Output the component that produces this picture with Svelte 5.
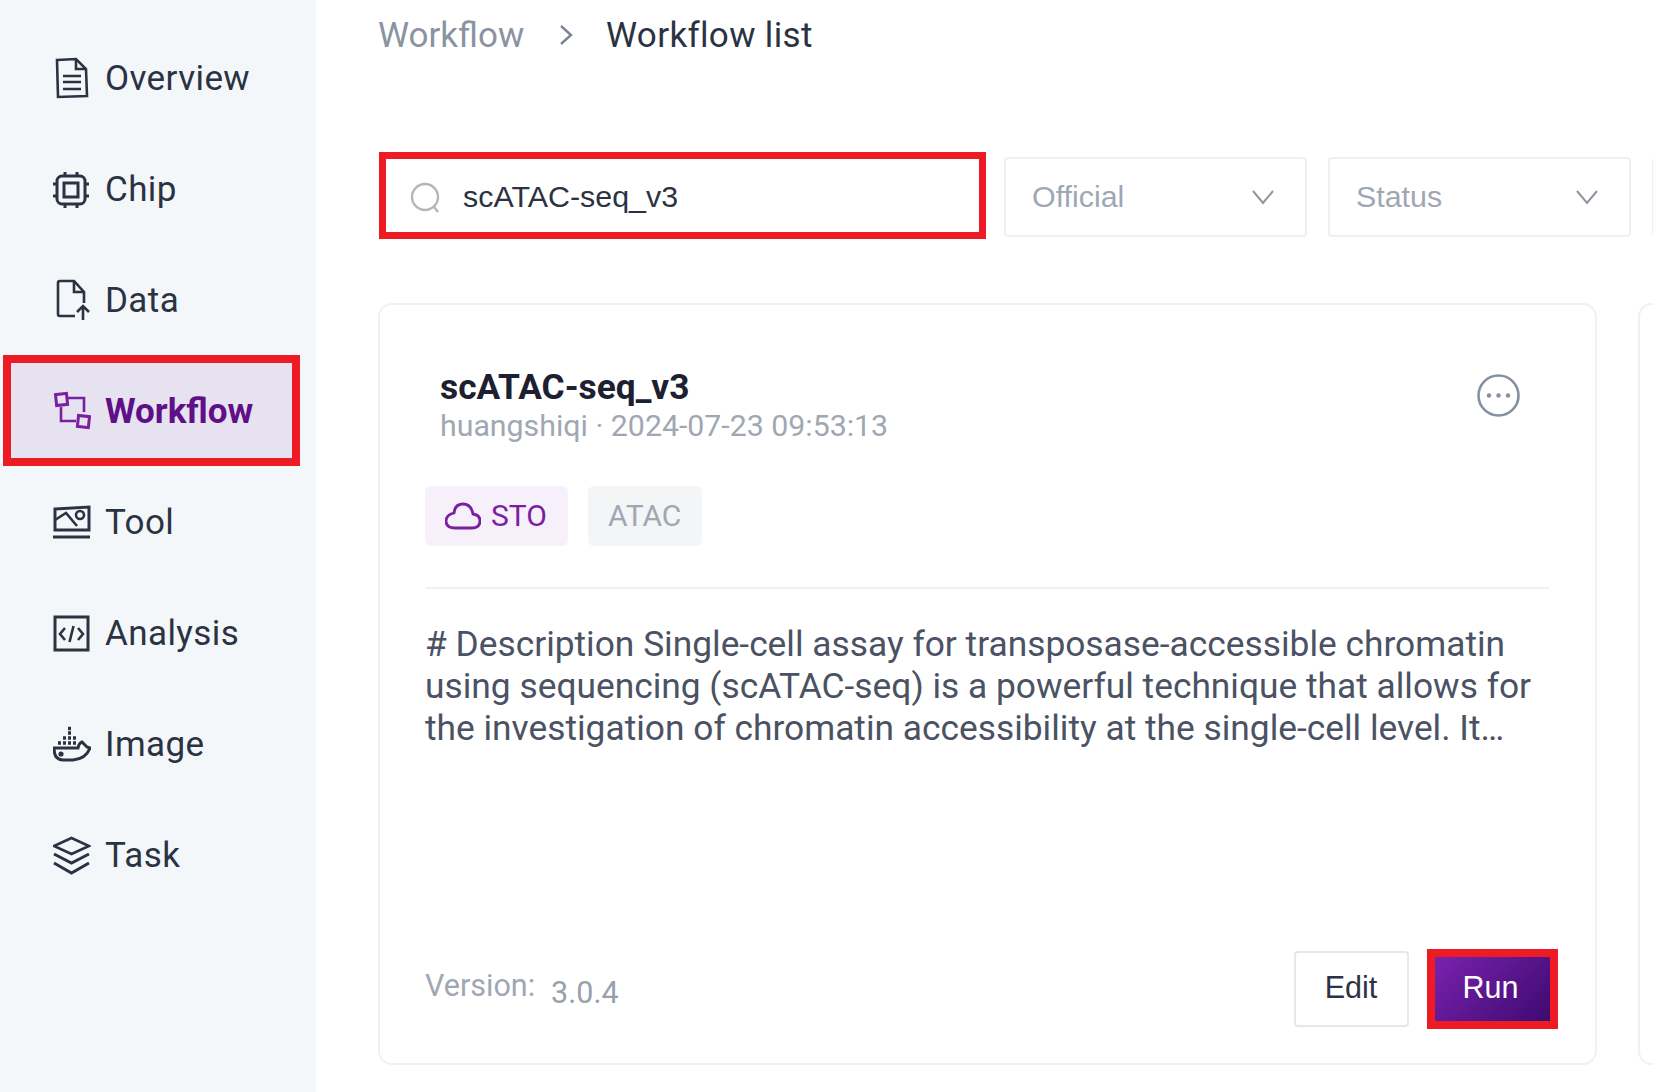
<script>
  const navItems = [
    { name: "Overview", icon: "overview" },
    { name: "Chip", icon: "chip" },
    { name: "Data", icon: "data" },
    { name: "Workflow", icon: "workflow", active: true },
    { name: "Tool", icon: "tool" },
    { name: "Analysis", icon: "analysis" },
    { name: "Image", icon: "image" },
    { name: "Task", icon: "task" }
  ];

  const selects = ["Official", "Status"];
</script>

<div class="page">
  <aside class="sidebar">
    {#each navItems as item (item.name)}
      <div class="nav-item" class:active={item.active}>
        <svg class="nav-icon" viewBox="0 0 38 42" fill="none" stroke="currentColor" stroke-width="2.6">
          {#if item.icon === "overview"}
            <path d="M4 3 L23 2 L33 12 L34 39 L5 40 Z" />
            <path d="M23 2 V12 H33" />
            <path d="M10 19 H28 M10 25 H28 M10 32 H28" />
          {:else if item.icon === "chip"}
            <rect x="4" y="8" width="28" height="28" rx="5" stroke-width="3" />
            <rect x="11" y="15" width="14" height="14" stroke-width="3" />
            <path d="M12 4 V8 M24 4 V8 M12 36 V40 M24 36 V40 M0 16 H4 M0 28 H4 M32 16 H36 M32 28 H36" stroke-width="3" />
          {:else if item.icon === "data"}
            <path d="M22 37 H7 Q5 37 5 35 V4 Q5 2 7 2 H21 L31 13 V24" />
            <path d="M21 2 V13 H31" />
            <path d="M30 41 V28 M24 33 L30 27 L36 33" />
          {:else if item.icon === "workflow"}
            <rect x="3" y="4" width="11" height="11" transform="rotate(-6 8 9)" stroke-width="3" />
            <rect x="25" y="26" width="11" height="11" transform="rotate(6 30 31)" stroke-width="3" />
            <path d="M15 8 H31 V22 M8 17 V31 H23" />
          {:else if item.icon === "tool"}
            <path d="M2 8 L36 6 V29 H2 Z" stroke-width="3" />
            <path d="M2 19 L13 12 L24 25" />
            <circle cx="27" cy="14" r="4" />
            <path d="M0 36 H37" stroke-width="3" />
          {:else if item.icon === "analysis"}
            <rect x="2" y="5" width="33" height="33" stroke-width="3" />
            <path d="M12 16 L7 22 L12 28 M25 16 L30 22 L25 28 M20.5 14 L16.5 30" />
          {:else if item.icon === "image"}
            <path d="M1 25 H25 Q26 20 29 19 Q32 22 34 24 L37 25 Q33 36 20 37 H10 Q1 37 1 25 Z" stroke-width="3" />
            <path d="M5 20 h3 M10 20 h3 M15 20 h3 M20 20 h3 M10 15 h3 M15 15 h3 M20 15 h3 M15 10 h3 M15 5.5 h3" stroke-width="3.4" />
            <circle cx="8" cy="31" r="1.3" fill="currentColor" />
          {:else}
            <path d="M18.5 4 L36 12 L18.5 20 L1 12 Z" />
            <path d="M1 20 L18.5 29 L36 20 M1 29 L18.5 39 L36 29" stroke-width="3" />
          {/if}
        </svg>
        <span>{item.name}</span>
      </div>
    {/each}
  </aside>

  <main class="content">
    <div class="breadcrumb">
      <span class="crumb-parent">Workflow</span>
      <svg class="crumb-arrow" viewBox="0 0 14 22" fill="none" stroke="#7b8494" stroke-width="2.4">
        <path d="M2 2 L12 11 L2 20" />
      </svg>
      <span class="crumb-current">Workflow list</span>
    </div>

    <div class="filters">
      <div class="search">
        <svg class="search-icon" viewBox="0 0 30 32" fill="none" stroke="#b3b7bd" stroke-width="2.4">
          <circle cx="15" cy="15" r="13" />
          <path d="M24 25 L28 30" />
        </svg>
        <span>scATAC-seq_v3</span>
      </div>
      {#each selects as label (label)}
        <div class="select">
          <span>{label}</span>
          <svg class="chevron" viewBox="0 0 24 16" fill="none" stroke="#8f959f" stroke-width="2">
            <path d="M2 2 L12 14 L22 2" />
          </svg>
        </div>
      {/each}
      <div class="select"></div>
    </div>

    <div class="cards">
      <section class="card">
        <div class="card-head">
          <div class="card-title">
            <h2>scATAC-seq_v3</h2>
            <p>huangshiqi · 2024-07-23 09:53:13</p>
          </div>
          <svg class="more" viewBox="0 0 43 43" fill="none">
            <circle cx="21.5" cy="21.5" r="20" stroke="#8690a0" stroke-width="2.6" />
            <circle cx="12" cy="21.5" r="2.2" fill="#8690a0" />
            <circle cx="21.5" cy="21.5" r="2.2" fill="#8690a0" />
            <circle cx="31" cy="21.5" r="2.2" fill="#8690a0" />
          </svg>
        </div>

        <div class="tags">
          <span class="tag tag-sto">
            <svg class="cloud" viewBox="0 0 36 28" fill="none" stroke="#7a1fa2" stroke-width="2.8">
              <path d="M10 26 H27 Q35 26 35 19 Q35 13 28 12 Q26 2 18 2 Q10 2 9 11 Q1 13 1 19 Q1 26 10 26 Z" />
            </svg>
            STO
          </span>
          <span class="tag tag-atac">ATAC</span>
        </div>

        <p class="description">
          # Description Single-cell assay for transposase-accessible chromatin using sequencing
          (scATAC-seq) is a powerful technique that allows for the investigation of chromatin
          accessibility at the single-cell level. It…
        </p>

        <div class="card-foot">
          <div class="version">
            <span>Version:</span>
            <span class="version-no">3.0.4</span>
          </div>
          <div class="actions">
            <button class="btn-edit">Edit</button>
            <button class="btn-run">Run</button>
          </div>
        </div>
      </section>
      <section class="card"></section>
    </div>
  </main>
</div>

<style>
  :global(body) {
    margin: 0;
    background: #fff;
  }

  .page {
    display: flex;
    width: 1653px;
    height: 1092px;
    overflow: hidden;
    font-family: Roboto, "Liberation Sans", sans-serif;
  }

  .sidebar {
    flex: 0 0 316px;
    box-sizing: border-box;
    padding: 22px 16px 0 3px;
    background: #f4f7fa;
  }

  .nav-item {
    box-sizing: border-box;
    display: flex;
    align-items: center;
    gap: 14px;
    height: 111px;
    padding-left: 50px;
    font-size: 35px;
    color: #2b3242;
    letter-spacing: 0.4px;
  }

  .nav-item span {
    margin-top: 1px;
  }

  .nav-item.active {
    padding-left: 42px;
    border: 8px solid #ed1c24;
    background: #e7e2ef;
    color: #5f0f87;
    font-weight: 700;
    letter-spacing: 0;
  }

  .nav-item.active .nav-icon {
    color: #7a1fa2;
  }

  .nav-icon {
    flex: 0 0 38px;
    width: 38px;
    height: 42px;
  }

  .content {
    flex: 1;
    min-width: 0;
    padding-left: 62px;
  }

  .breadcrumb {
    display: flex;
    align-items: center;
    height: 70px;
    font-size: 35px;
  }

  .crumb-parent {
    width: 181px;
    color: #8a93a1;
  }

  .crumb-arrow {
    width: 14px;
    height: 22px;
    margin-right: 33px;
  }

  .crumb-current {
    color: #2b3242;
    letter-spacing: 0.35px;
  }

  .filters {
    display: flex;
    align-items: flex-start;
    gap: 21px;
    height: 87px;
    margin-top: 82px;
  }

  .search {
    box-sizing: border-box;
    flex: 0 0 607px;
    height: 87px;
    display: flex;
    align-items: center;
    gap: 23px;
    padding: 4px 0 0 24px;
    margin: 0 -3px 0 1px;
    border: 7px solid #ed1c24;
    font-size: 30.4px;
    color: #2b3242;
    font-family: "Liberation Sans", sans-serif;
  }

  .search span,
  .select span {
    margin-top: -2px;
  }

  .search-icon {
    width: 30px;
    height: 32px;
  }

  .select {
    box-sizing: border-box;
    flex: 0 0 303px;
    height: 80px;
    margin-top: 5px;
    display: flex;
    align-items: center;
    justify-content: space-between;
    padding: 0 30px 0 26px;
    border: 2px solid #eef0f5;
    border-radius: 4px;
    font-size: 30.4px;
    color: #a0a7b3;
    font-family: "Liberation Sans", sans-serif;
  }

  .chevron {
    width: 24px;
    height: 16px;
  }

  .cards {
    display: flex;
    gap: 41px;
    margin-top: 64px;
  }

  .card {
    box-sizing: border-box;
    flex: 0 0 1219px;
    height: 762px;
    display: flex;
    flex-direction: column;
    padding: 0 46px 0 45px;
    border: 2px solid #f0f1f6;
    border-radius: 14px;
  }

  .card-head {
    display: flex;
    justify-content: space-between;
    align-items: flex-start;
    padding: 62px 29px 0 15px;
  }

  h2 {
    margin: 0;
    font-size: 35.3px;
    line-height: 41px;
    font-weight: 700;
    color: #1c2030;
  }

  .card-title p {
    margin: -1px 0 0;
    font-size: 30.3px;
    line-height: 38px;
    color: #a0a7b3;
  }

  .more {
    width: 43px;
    height: 43px;
    margin-top: 7px;
  }

  .tags {
    display: flex;
    gap: 20px;
    margin-top: 41px;
    padding-bottom: 41px;
    border-bottom: 2px solid #f0f1f4;
  }

  .tag {
    box-sizing: border-box;
    display: flex;
    align-items: center;
    gap: 10px;
    height: 60px;
    padding: 0 20px 2px;
    border-radius: 6px;
    font-size: 30px;
  }

  .tag-sto {
    padding-right: 21px;
    background: #f5f0f9;
    color: #7a1fa2;
  }

  .tag-atac {
    padding-right: 21px;
    background: #f3f5f7;
    color: #a0a7b3;
  }

  .cloud {
    width: 36px;
    height: 28px;
    margin-top: 2px;
  }

  .description {
    margin: 34px 0 0;
    font-size: 35.35px;
    line-height: 42px;
    color: #4a5263;
  }

  .card-foot {
    margin-top: auto;
    display: flex;
    align-items: center;
    justify-content: space-between;
    padding-bottom: 34px;
  }

  .version {
    display: flex;
    gap: 16px;
    margin-top: -8px;
    font-size: 30.5px;
    color: #a0a7b3;
  }

  .version-no {
    position: relative;
    top: 7px;
    color: #98a0ad;
  }

  .actions {
    display: flex;
    align-items: center;
    gap: 17px;
    margin-right: -9px;
  }

  button {
    box-sizing: border-box;
    font-family: "Liberation Sans", sans-serif;
    font-size: 30.5px;
    padding: 0 0 3px;
  }

  .btn-edit {
    width: 115px;
    height: 76px;
    margin: -1px 1px 0 -1px;
    padding-right: 1px;
    background: #fff;
    border: 2px solid #e6e7ee;
    border-radius: 4px;
    color: #2b3242;
  }

  .btn-run {
    width: 131px;
    height: 80px;
    padding-right: 4px;
    border: 8px solid #ed1c24;
    background: linear-gradient(135deg, #7a22ae, #3d0a70);
    color: #fff;
  }
</style>
